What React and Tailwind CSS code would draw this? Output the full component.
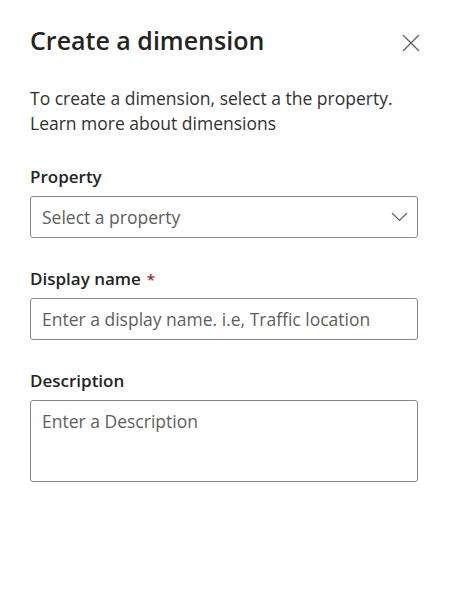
import React from "react";

function CloseIcon() {
  return (
    <svg width="18" height="18" viewBox="0 0 18 18" fill="none">
      <path d="M1 1L17 17M17 1L1 17" stroke="#616161" strokeWidth="1.3" />
    </svg>
  );
}

function ChevronDown() {
  return (
    <svg width="17" height="10" viewBox="0 0 17 10" fill="none">
      <path d="M1 1L8.5 8.5L16 1" stroke="#616161" strokeWidth="1.2" />
    </svg>
  );
}

function Field({ label, required, children }) {
  return (
    <div className="flex flex-col">
      <label className="mb-[7px] text-[17px] leading-[24px] font-semibold text-[#242424]">
        {label}
        {required && <span className="ml-[6px] text-[15px] text-[#a4262c]">*</span>}
      </label>
      {children}
    </div>
  );
}

export default function App() {
  return (
    <div
      className="min-h-[611px] w-[450px] bg-white pl-[30px] pr-[32px] pt-[22px] text-[#242424]"
      style={{ fontFamily: '"Open Sans", "Noto Sans", sans-serif' }}
    >
      <div className="flex items-start justify-between">
        <h2 className="text-[25px] leading-[36px] font-semibold text-[#242424]">
          Create a dimension
        </h2>
        <button type="button" className="mr-[-2px] mt-[12px] text-[#616161]">
          <CloseIcon />
        </button>
      </div>

      <p className="mt-[28px] text-[17.5px] leading-[25px] text-[#323130]">
        To create a dimension, select a the property.
        <br />
        Learn more about dimensions
      </p>

      <div className="mt-[29px] flex flex-col gap-[29px]">
        <Field label="Property">
          <div className="flex h-[42px] items-center justify-between rounded-[3px] border border-[#8a8886] pl-[11px] pr-[9px]">
            <span className="text-[17.5px] text-[#605e5c]">Select a property</span>
            <ChevronDown />
          </div>
        </Field>

        <Field label="Display name" required>
          <input
            type="text"
            placeholder="Enter a display name. i.e, Traffic location"
            className="h-[42px] rounded-[3px] border border-[#8a8886] px-[11px] text-[17.5px] text-[#242424] outline-none placeholder:text-[#605e5c]"
          />
        </Field>

        <Field label="Description">
          <textarea
            placeholder="Enter a Description"
            className="h-[82px] resize-none rounded-[3px] border border-[#8a8886] px-[11px] py-[8px] text-[17.5px] leading-[24px] text-[#242424] outline-none placeholder:text-[#605e5c]"
          />
        </Field>
      </div>
    </div>
  );
}
